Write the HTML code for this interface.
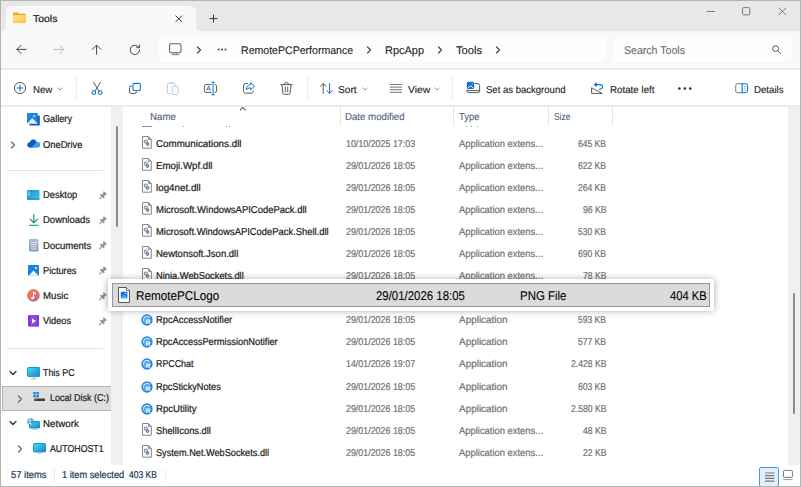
<!DOCTYPE html>
<html><head><meta charset="utf-8"><title>Tools</title>
<style>
*{box-sizing:border-box;margin:0;padding:0}
html,body{width:801px;height:487px;overflow:hidden;background:#fff}
body{font-family:"Liberation Sans",sans-serif;font-size:10px;color:#1b1b1b;position:relative;text-rendering:geometricPrecision}
.a{position:absolute}
.t{position:absolute;white-space:nowrap;line-height:14px;height:14px;transform-origin:0 50%;-webkit-text-stroke:0.22px currentColor}
#titlebar{left:0;top:0;width:801px;height:31px;background:#e8e8e8}
#tab{left:6px;top:6px;width:190px;height:25px;background:#f8f8f8;border-radius:6px 6px 0 0}
#navrow{left:0;top:31px;width:801px;height:37px;background:#f8f8f8}
#addr{left:159px;top:37px;width:447px;height:25px;background:#fdfdfd;border-radius:4px}
#search{left:613px;top:37px;width:179px;height:25px;background:#fdfdfd;border-radius:4px}
#cmd{left:0;top:68px;width:801px;height:39px;background:#fff}
.hl{left:0;width:801px;height:2px;background:#ececec}
#navpane{left:0;top:107px;width:111px;height:358px;background:#fff}
#navscroll{left:110.5px;top:107px;width:12.5px;height:358px;background:#f0f0f0}
#list{left:123px;top:107px;width:665px;height:358px;background:#fff;overflow:hidden}
#vscroll{left:788px;top:107px;width:12px;height:358px;background:#f0f0f0}
#status{left:0;top:465px;width:801px;height:22px;background:#fff}
#frame{left:0;top:0;width:801px;height:487px;border:1px solid #b4b4b4;pointer-events:none}
.nav{color:#1b1b1b}
.row .n{left:156.5px}
.hdr{color:#4c607a}
.g{color:#6d6d6d}
</style></head><body>
<div id="titlebar" class="a"></div>
<div id="tab" class="a"></div>
<div id="navrow" class="a"></div>
<div id="addr" class="a"></div>
<div id="search" class="a"></div>
<div id="cmd" class="a"></div>
<div class="a hl" style="top:68px"></div>
<div class="a hl" style="top:105px"></div>
<div id="navpane" class="a"></div>
<div id="navscroll" class="a"></div>
<div id="list" class="a"></div>
<div id="vscroll" class="a"></div>
<div id="status" class="a"></div>
<div class="a" style="left:196px;top:27px;width:4px;height:4px;background:radial-gradient(circle at 100% 0,#e8e8e8 3.5px,#f8f8f8 4.2px)"></div>
<div class="a" style="left:2px;top:27px;width:4px;height:4px;background:radial-gradient(circle at 0 0,#e8e8e8 3.5px,#f8f8f8 4.2px)"></div>
<svg class="a" style="left:13px;top:12px;" width="13" height="11" viewBox="0 0 13 11" fill="none"><path d="M0 1.6 Q0 0.4 1.2 0.4 H4.6 L6 1.8 H11.8 Q13 1.8 13 3 V9.6 Q13 10.8 11.8 10.8 H1.2 Q0 10.8 0 9.6 Z" fill="#eda90c"/><defs><linearGradient id="fg" x1="0" y1="0" x2="0.6" y2="1"><stop offset="0" stop-color="#ffe48f"/><stop offset="1" stop-color="#ffc94a"/></linearGradient></defs><path d="M0 4 Q0 3 1.2 3 H11.8 Q13 3 13 4.2 V9.6 Q13 10.8 11.8 10.8 H1.2 Q0 10.8 0 9.6 Z" fill="url(#fg)"/></svg>
<svg class="a" style="left:174px;top:13.7px;" width="10" height="10" viewBox="0 0 10 10" fill="none"><path d="M1.6 1.6 L8 8 M8 1.6 L1.6 8" stroke="#333" stroke-width="1"/></svg>
<svg class="a" style="left:208px;top:13px;" width="11" height="11" viewBox="0 0 11 11" fill="none"><path d="M5.5 1.7 V9.5 M1.6 5.6 H9.4" stroke="#333" stroke-width="1"/></svg>
<svg class="a" style="left:705px;top:6px;" width="12" height="12" viewBox="0 0 12 12" fill="none"><path d="M1.6 5.5 H9.8" stroke="#7a7a7a" stroke-width="1"/></svg>
<svg class="a" style="left:741px;top:6px;" width="12" height="12" viewBox="0 0 12 12" fill="none"><rect x="1.6" y="1.6" width="7.2" height="7.2" rx="1" stroke="#7a7a7a" stroke-width="1"/></svg>
<svg class="a" style="left:777px;top:6px;" width="12" height="12" viewBox="0 0 12 12" fill="none"><path d="M1.6 1.8 L9.2 9 M9.2 1.8 L1.6 9" stroke="#7a7a7a" stroke-width="1"/></svg>
<svg class="a" style="left:15px;top:43px;" width="14" height="13" viewBox="0 0 14 13" fill="none"><path d="M2 6.4 H11.2 M6 2.3 L1.9 6.4 L6 10.5" stroke="#444" stroke-width="1" stroke-linecap="round" stroke-linejoin="round"/></svg>
<svg class="a" style="left:52px;top:43px;" width="14" height="13" viewBox="0 0 14 13" fill="none"><path d="M2 6.4 H11.6 M7.6 2.3 L11.7 6.4 L7.6 10.5" stroke="#bdbdbd" stroke-width="1" stroke-linecap="round" stroke-linejoin="round"/></svg>
<svg class="a" style="left:90px;top:43px;" width="14" height="13" viewBox="0 0 14 13" fill="none"><path d="M6.6 2.3 V11.3 M2.3 6.4 L6.6 2.1 L10.9 6.4" stroke="#444" stroke-width="1" stroke-linecap="round" stroke-linejoin="round"/></svg>
<svg class="a" style="left:128px;top:43px;" width="14" height="13" viewBox="0 0 14 13" fill="none"><path d="M10.9 4.4 A4.7 4.7 0 1 0 11.6 6.9" stroke="#444" stroke-width="1" stroke-linecap="round"/><path d="M11.4 1.9 V4.7 H8.6" stroke="#444" stroke-width="1" stroke-linecap="round" stroke-linejoin="round"/></svg>
<svg class="a" style="left:168px;top:42px;" width="15" height="14" viewBox="0 0 15 14" fill="none"><rect x="1.6" y="1.7" width="11.4" height="9" rx="1.7" stroke="#5e5e5e" stroke-width="1.05"/><path d="M5.9 10.8 V12.5 M8.7 10.8 V12.5" stroke="#777" stroke-width="0.9"/><path d="M3.8 12.7 H10.8" stroke="#777" stroke-width="0.9" stroke-linecap="round"/></svg>
<svg class="a" style="left:194.9px;top:44.5px;" width="8" height="10" viewBox="0 0 8 10" fill="none"><path d="M2.5 2 L5.5 5 L2.5 8" stroke="#444" stroke-width="1.15" stroke-linecap="round" stroke-linejoin="round"/></svg>
<svg class="a" style="left:364.5px;top:44.5px;" width="8" height="10" viewBox="0 0 8 10" fill="none"><path d="M2.5 2 L5.5 5 L2.5 8" stroke="#444" stroke-width="1.15" stroke-linecap="round" stroke-linejoin="round"/></svg>
<svg class="a" style="left:436px;top:44.5px;" width="8" height="10" viewBox="0 0 8 10" fill="none"><path d="M2.5 2 L5.5 5 L2.5 8" stroke="#444" stroke-width="1.15" stroke-linecap="round" stroke-linejoin="round"/></svg>
<svg class="a" style="left:494px;top:44.5px;" width="8" height="10" viewBox="0 0 8 10" fill="none"><path d="M2.5 2 L5.5 5 L2.5 8" stroke="#444" stroke-width="1.15" stroke-linecap="round" stroke-linejoin="round"/></svg>
<svg class="a" style="left:216.8px;top:47px;" width="12" height="5" viewBox="0 0 12 5" fill="none"><circle cx="1.7" cy="2.5" r="1" fill="#444"/><circle cx="5.1" cy="2.5" r="1" fill="#444"/><circle cx="8.5" cy="2.5" r="1" fill="#444"/></svg>
<svg class="a" style="left:771px;top:44px;" width="11" height="11" viewBox="0 0 11 11" fill="none"><circle cx="4.6" cy="4.6" r="2.9" stroke="#555" stroke-width="1"/><path d="M6.8 6.8 L9.6 9.6" stroke="#555" stroke-width="1" stroke-linecap="round"/></svg>
<svg class="a" style="left:13px;top:81px;" width="14" height="14" viewBox="0 0 14 14" fill="none"><circle cx="7" cy="7" r="5.6" stroke="#5a5a5a" stroke-width="1"/><path d="M7 4.2 V9.8 M4.2 7 H9.8" stroke="#1173d4" stroke-width="1.1" stroke-linecap="round"/></svg>
<svg class="a" style="left:55.2px;top:85px;" width="10" height="8" viewBox="0 0 10 8" fill="none"><path d="M3.0 3.0 L5 5.0 L7.0 3.0" stroke="#8a8a8a" stroke-width="0.9" stroke-linecap="round" stroke-linejoin="round"/></svg>
<svg class="a" style="left:359.5px;top:85px;" width="10" height="8" viewBox="0 0 10 8" fill="none"><path d="M3.0 3.0 L5 5.0 L7.0 3.0" stroke="#8a8a8a" stroke-width="0.9" stroke-linecap="round" stroke-linejoin="round"/></svg>
<svg class="a" style="left:432.3px;top:85px;" width="10" height="8" viewBox="0 0 10 8" fill="none"><path d="M3.0 3.0 L5 5.0 L7.0 3.0" stroke="#8a8a8a" stroke-width="0.9" stroke-linecap="round" stroke-linejoin="round"/></svg>
<div class="a" style="left:75.5px;top:76px;width:1px;height:24px;background:#ececec"></div>
<div class="a" style="left:307.0px;top:76px;width:1px;height:24px;background:#ececec"></div>
<div class="a" style="left:452.0px;top:76px;width:1px;height:24px;background:#ececec"></div>
<svg class="a" style="left:90px;top:81px;" width="14" height="15" viewBox="0 0 14 15" fill="none"><path d="M3.6 1.2 L9 10.2 M10.4 1.2 L5 10.2" stroke="#5a5a5a" stroke-width="1" stroke-linecap="round"/><circle cx="3.8" cy="11.6" r="1.9" stroke="#1173d4" stroke-width="1.1"/><circle cx="10.2" cy="11.6" r="1.9" stroke="#1173d4" stroke-width="1.1"/></svg>
<svg class="a" style="left:128px;top:82px;" width="14" height="13" viewBox="0 0 14 13" fill="none"><path d="M4.2 4 H3 Q1.6 4 1.6 5.4 V10 Q1.6 11.4 3 11.4 H7 Q8.4 11.4 8.4 10 V9.6" stroke="#5a5a5a" stroke-width="1"/><rect x="5" y="1.4" width="7.4" height="7.4" rx="1.7" stroke="#1173d4" stroke-width="1.1"/></svg>
<svg class="a" style="left:166px;top:81px;" width="14" height="15" viewBox="0 0 14 15" fill="none"><path d="M5.6 12.6 H2.6 Q1.4 12.6 1.4 11.4 V3.4 Q1.4 2.2 2.6 2.2 H8 Q9.2 2.2 9.2 3.4 V4.6" stroke="#c9c9c9" stroke-width="1"/><rect x="3.6" y="1" width="3.6" height="2" rx="0.8" fill="#d6d6d6"/><rect x="6.3" y="5.2" width="5.8" height="8.4" rx="1.2" stroke="#a9d0f4" stroke-width="1"/></svg>
<svg class="a" style="left:203px;top:81px;" width="15" height="15" viewBox="0 0 15 15" fill="none"><path d="M8.6 3.6 H3 Q1.4 3.6 1.4 5.2 V9.8 Q1.4 11.4 3 11.4 H8.6 M11.6 3.6 H12 Q13.6 3.6 13.6 5.2 V9.8 Q13.6 11.4 12 11.4 H11.6" stroke="#5a5a5a" stroke-width="1"/><path d="M10.1 1.4 V13.6 M8.8 1.2 H11.4 M8.8 13.8 H11.4" stroke="#1173d4" stroke-width="1" stroke-linecap="round"/><path d="M3.6 9.6 L5.6 5 L7.6 9.6 M4.3 8.2 H6.9" stroke="#1173d4" stroke-width="0.9" stroke-linejoin="round"/></svg>
<svg class="a" style="left:242px;top:81px;" width="14" height="14" viewBox="0 0 14 14" fill="none"><path d="M5.4 2.6 H3.4 Q1.6 2.6 1.6 4.4 V10.4 Q1.6 12.2 3.4 12.2 H9.4 Q11.2 12.2 11.2 10.4 V9.8" stroke="#5a5a5a" stroke-width="1" stroke-linecap="round"/><path d="M8.6 1.6 L12.6 5.2 L8.6 8.8 V6.8 Q5.6 6.6 4.4 9 Q4.6 4 8.6 3.6 Z" stroke="#1173d4" stroke-width="1" stroke-linejoin="round"/></svg>
<svg class="a" style="left:279px;top:81px;" width="15" height="15" viewBox="0 0 15 15" fill="none"><path d="M1.8 3.6 H13.2 M5.4 3.4 Q5.4 1.4 7.5 1.4 Q9.6 1.4 9.6 3.4 M3 3.8 L3.9 12 Q4 13.4 5.4 13.4 H9.6 Q11 13.4 11.1 12 L12 3.8 M6.3 6 V10.8 M8.7 6 V10.8" stroke="#5a5a5a" stroke-width="1" stroke-linecap="round"/></svg>
<svg class="a" style="left:319px;top:82px;" width="15" height="13" viewBox="0 0 15 13" fill="none"><path d="M4.2 11.4 V1.6 M1.4 4.4 L4.2 1.5 L7 4.4" stroke="#5a5a5a" stroke-width="1" stroke-linecap="round" stroke-linejoin="round"/><path d="M10.6 1.4 V11.2 M7.8 8.4 L10.6 11.3 L13.4 8.4" stroke="#1173d4" stroke-width="1" stroke-linecap="round" stroke-linejoin="round"/></svg>
<svg class="a" style="left:389px;top:83px;" width="14" height="11" viewBox="0 0 14 11" fill="none"><path d="M0.8 1.5 H13 M0.8 4.1 H13 M0.8 6.7 H13 M0.8 9.3 H13" stroke="#666" stroke-width="0.9"/></svg>
<svg class="a" style="left:466px;top:81px;" width="15" height="13" viewBox="0 0 15 13" fill="none"><path d="M8.6 2.6 H11.6 Q13.6 2.6 13.6 4.6 V9.8 Q13.6 11.6 11.8 11.6 H2.8 Q1 11.6 1 9.8 V8.4 M1 9.6 H13.6" stroke="#5a5a5a" stroke-width="1"/><rect x="0.8" y="0.8" width="7.4" height="7.2" rx="1.5" fill="#1173d4"/><path d="M1.8 7.2 L4.5 4.6 L7.2 7.2" stroke="#fff" stroke-width="0.9"/><circle cx="6.2" cy="2.8" r="0.6" fill="#cfe5fa"/></svg>
<svg class="a" style="left:590px;top:82px;" width="15" height="13" viewBox="0 0 15 13" fill="none"><path d="M1.6 5.8 V11.4 H12.2 Z" stroke="#5a5a5a" stroke-width="1" stroke-linejoin="round"/><path d="M4.4 2.6 H9.6 Q12.6 2.6 12.6 5 Q12.6 7 9.2 7.4" stroke="#1173d4" stroke-width="1.1" stroke-linecap="round"/><path d="M6.4 0.8 L4.2 2.6 L6.4 4.4 Z" fill="#1173d4" stroke="#1173d4" stroke-width="0.8" stroke-linejoin="round"/></svg>
<svg class="a" style="left:677px;top:86px;" width="16" height="5" viewBox="0 0 16 5" fill="none"><circle cx="2.4" cy="2.6" r="1.25" fill="#2a2a2a"/><circle cx="7.8" cy="2.6" r="1.25" fill="#2a2a2a"/><circle cx="13.2" cy="2.6" r="1.25" fill="#2a2a2a"/></svg>
<svg class="a" style="left:734px;top:82px;" width="15" height="12" viewBox="0 0 15 12" fill="none"><path d="M8.2 1.7 H3.6 Q1.7 1.7 1.7 3.6 V8.8 Q1.7 10.7 3.6 10.7 H8.2" stroke="#777" stroke-width="1"/><path d="M8.2 1.7 H11.6 Q13.5 1.7 13.5 3.6 V8.8 Q13.5 10.7 11.6 10.7 H8.2 Z" stroke="#1173d4" stroke-width="1.1"/><path d="M10.2 4.4 H11.8 M10.2 6.2 H11.8 M10.2 8 H11.8" stroke="#6aaef0" stroke-width="0.9"/></svg>
<svg class="a" style="left:238px;top:105.5px;" width="10" height="6" viewBox="0 0 10 6" fill="none"><path d="M1.9 4.4 L4.8 1.5 L7.7 4.4" stroke="#5a5a5a" stroke-width="1.05"/></svg>
<div class="a" style="left:340.0px;top:106px;width:1px;height:20px;background:#e5e5e5"></div>
<div class="a" style="left:453.2px;top:106px;width:1px;height:20px;background:#e5e5e5"></div>
<div class="a" style="left:548.2px;top:106px;width:1px;height:20px;background:#e5e5e5"></div>
<div class="a" style="left:611.5px;top:106px;width:1px;height:20px;background:#e5e5e5"></div>
<div class="a" style="left:142px;top:126px;width:9.5px;height:1px;background:#8c8c8c"></div>
<div class="a" style="left:183px;top:126px;width:1.2px;height:1px;background:#999"></div>
<div class="a" style="left:225.5px;top:126px;width:1.2px;height:1px;background:#999"></div>
<div class="a" style="left:229px;top:126px;width:1.2px;height:1px;background:#999"></div>
<div class="a" style="left:466px;top:126px;width:1px;height:1px;background:#999"></div>
<div class="a" style="left:471px;top:126px;width:1px;height:1px;background:#999"></div>
<div class="a" style="left:477px;top:126px;width:1px;height:1px;background:#999"></div>
<div class="a" style="left:116px;top:126px;width:2px;height:101px;background:#8a8a8a;border-radius:1px"></div>
<div class="a" style="left:793px;top:292.5px;width:2px;height:121px;background:#8a8a8a;border-radius:1px"></div>
<div class="a" style="left:8px;top:169.5px;width:95px;height:1px;background:#e3e3e3"></div>
<div class="a" style="left:8px;top:347.5px;width:95px;height:1px;background:#e3e3e3"></div>
<div class="a" style="left:2px;top:386px;width:108.5px;height:24.5px;background:#dedede;border:1px solid #b4b4b4;border-right:0"></div>
<svg class="a" style="left:27px;top:112.5px;" width="13" height="13" viewBox="0 0 13 13" fill="none"><rect x="2.4" y="2.4" width="10.4" height="10.2" rx="1.2" fill="#0f5cb8"/><rect x="0" y="0" width="10.8" height="10.2" rx="1" fill="#1b84de"/><path d="M0.6 10.2 L5.2 5 L10.4 10.2 V10.8 H1.2 Z" fill="#e4f1fc"/><circle cx="7.2" cy="2.9" r="0.9" fill="#e4f1fc"/></svg>
<svg class="a" style="left:26.5px;top:139.2px;" width="13.5" height="9" viewBox="0 0 13.5 9" fill="none"><path d="M3.6 8.4 Q0.4 8.4 0.4 5.8 Q0.4 3.6 2.8 3.2 Q3.8 0.4 6.6 0.6 Q8.6 0.8 9.6 2.8 Q13 2.8 13 5.8 Q13 8.4 10.4 8.4 Z" fill="#1a8ae6"/><path d="M2.8 3.2 Q3.8 0.4 6.6 0.6 Q8.4 0.8 9.4 2.6 L4.6 8.4 H3.6 Q0.4 8.4 0.4 5.8 Q0.4 3.6 2.8 3.2 Z" fill="#0c58c4"/><path d="M5.4 8.4 L9.6 2.9 Q13 2.8 13 5.8 Q13 8.4 10.4 8.4 Z" fill="#36a6f2"/></svg>
<svg class="a" style="left:9px;top:139.7px;" width="8" height="10" viewBox="0 0 8 10" fill="none"><path d="M2.5 2 L5.5 5 L2.5 8" stroke="#6a6a6a" stroke-width="1.3" stroke-linecap="round" stroke-linejoin="round"/></svg>
<svg class="a" style="left:27px;top:190px;" width="12.5" height="10" viewBox="0 0 12.5 10" fill="none"><defs><linearGradient id="dk" x1="0" y1="0" x2="1" y2="1"><stop offset="0" stop-color="#1592d6"/><stop offset="1" stop-color="#3cc4ec"/></linearGradient></defs><rect width="12.5" height="9.6" rx="1" fill="url(#dk)"/><rect x="1.2" y="1.6" width="1.6" height="1.2" fill="#e8f6fd"/><rect x="1.2" y="4" width="1.6" height="1.2" fill="#e8f6fd"/><rect x="0" y="8.6" width="12.5" height="1" fill="#0f6fae"/></svg>
<svg class="a" style="left:28.5px;top:213.5px;" width="10" height="13" viewBox="0 0 10 13" fill="none"><path d="M4.8 0.6 V8.6 M1.2 5.2 L4.8 8.8 L8.4 5.2" stroke="#129a6a" stroke-width="1.2" stroke-linecap="round" stroke-linejoin="round"/><path d="M0.6 11.4 H9" stroke="#1fb47a" stroke-width="1.2" stroke-linecap="round"/></svg>
<svg class="a" style="left:28.5px;top:239px;" width="10" height="13" viewBox="0 0 10 13" fill="none"><defs><linearGradient id="dc" x1="0" y1="0" x2="0" y2="1"><stop offset="0" stop-color="#a9bdd4"/><stop offset="1" stop-color="#7f98b6"/></linearGradient></defs><rect width="9.4" height="12.4" rx="1" fill="url(#dc)"/><path d="M1.8 3.4 H5 M1.8 5.6 H7.6 M1.8 7.8 H7.6 M1.8 10 H7.6" stroke="#f2f6fa" stroke-width="0.9"/><rect x="5.8" y="2.4" width="1.8" height="1.8" fill="#f2f6fa"/></svg>
<svg class="a" style="left:27.5px;top:265px;" width="11.5" height="11" viewBox="0 0 11.5 11" fill="none"><rect width="11.4" height="10.8" rx="1.2" fill="#1b84de"/><path d="M0.8 10.8 L5.4 5.6 L10.6 10.8 Z" fill="#f0f7fd"/><circle cx="8" cy="3" r="1" fill="#f0f7fd"/></svg>
<svg class="a" style="left:26.8px;top:289.2px;" width="13" height="13" viewBox="0 0 13 13" fill="none"><defs><linearGradient id="mu" x1="0" y1="0" x2="1" y2="1"><stop offset="0" stop-color="#f08a3c"/><stop offset="1" stop-color="#cc5a9c"/></linearGradient></defs><circle cx="6.4" cy="6.4" r="6.3" fill="url(#mu)"/><path d="M6.6 9 V3.2 Q7.6 3.4 8.6 4.6" stroke="#fff" stroke-width="1.1" stroke-linecap="round"/><ellipse cx="5.6" cy="9" rx="1.5" ry="1.2" fill="#fff"/></svg>
<svg class="a" style="left:27.5px;top:315px;" width="11.5" height="12" viewBox="0 0 11.5 12" fill="none"><rect width="11.4" height="11.8" rx="1.2" fill="#9046e4"/><path d="M4 3.4 V8.4 L8 5.9 Z" fill="#fff"/><path d="M1.4 1 V11" stroke="#5a1fa8" stroke-width="1.2" stroke-dasharray="1.2 1.4"/><path d="M10 1 V11" stroke="#5a1fa8" stroke-width="1.2" stroke-dasharray="1.2 1.4"/></svg>
<svg class="a" style="left:98px;top:190.5px;" width="9" height="9" viewBox="0 0 9 9" fill="none"><path d="M5.3 0.5 L6.3 0.5 L8.6 2.8 L8.6 3.7 L7.2 4.1 L6.3 5.0 L6.5 7.0 L5.7 7.5 L2.0 3.9 L2.5 3.1 L4.5 3.3 L5.4 2.3 L5.0 1.1 Z" fill="#8796a2"/><path d="M3.8 5.6 L1.6 7.8" stroke="#8796a2" stroke-width="1.1" stroke-linecap="round"/></svg>
<svg class="a" style="left:98px;top:215.8px;" width="9" height="9" viewBox="0 0 9 9" fill="none"><path d="M5.3 0.5 L6.3 0.5 L8.6 2.8 L8.6 3.7 L7.2 4.1 L6.3 5.0 L6.5 7.0 L5.7 7.5 L2.0 3.9 L2.5 3.1 L4.5 3.3 L5.4 2.3 L5.0 1.1 Z" fill="#8796a2"/><path d="M3.8 5.6 L1.6 7.8" stroke="#8796a2" stroke-width="1.1" stroke-linecap="round"/></svg>
<svg class="a" style="left:98px;top:241.1px;" width="9" height="9" viewBox="0 0 9 9" fill="none"><path d="M5.3 0.5 L6.3 0.5 L8.6 2.8 L8.6 3.7 L7.2 4.1 L6.3 5.0 L6.5 7.0 L5.7 7.5 L2.0 3.9 L2.5 3.1 L4.5 3.3 L5.4 2.3 L5.0 1.1 Z" fill="#8796a2"/><path d="M3.8 5.6 L1.6 7.8" stroke="#8796a2" stroke-width="1.1" stroke-linecap="round"/></svg>
<svg class="a" style="left:98px;top:266.3px;" width="9" height="9" viewBox="0 0 9 9" fill="none"><path d="M5.3 0.5 L6.3 0.5 L8.6 2.8 L8.6 3.7 L7.2 4.1 L6.3 5.0 L6.5 7.0 L5.7 7.5 L2.0 3.9 L2.5 3.1 L4.5 3.3 L5.4 2.3 L5.0 1.1 Z" fill="#8796a2"/><path d="M3.8 5.6 L1.6 7.8" stroke="#8796a2" stroke-width="1.1" stroke-linecap="round"/></svg>
<svg class="a" style="left:98px;top:291.6px;" width="9" height="9" viewBox="0 0 9 9" fill="none"><path d="M5.3 0.5 L6.3 0.5 L8.6 2.8 L8.6 3.7 L7.2 4.1 L6.3 5.0 L6.5 7.0 L5.7 7.5 L2.0 3.9 L2.5 3.1 L4.5 3.3 L5.4 2.3 L5.0 1.1 Z" fill="#8796a2"/><path d="M3.8 5.6 L1.6 7.8" stroke="#8796a2" stroke-width="1.1" stroke-linecap="round"/></svg>
<svg class="a" style="left:98px;top:316.6px;" width="9" height="9" viewBox="0 0 9 9" fill="none"><path d="M5.3 0.5 L6.3 0.5 L8.6 2.8 L8.6 3.7 L7.2 4.1 L6.3 5.0 L6.5 7.0 L5.7 7.5 L2.0 3.9 L2.5 3.1 L4.5 3.3 L5.4 2.3 L5.0 1.1 Z" fill="#8796a2"/><path d="M3.8 5.6 L1.6 7.8" stroke="#8796a2" stroke-width="1.1" stroke-linecap="round"/></svg>
<svg class="a" style="left:8.2px;top:368.6px;" width="10" height="8" viewBox="0 0 10 8" fill="none"><path d="M2.0 2.5 L5 5.5 L8.0 2.5" stroke="#333" stroke-width="1.3" stroke-linecap="round" stroke-linejoin="round"/></svg>
<svg class="a" style="left:26.6px;top:367.2px;" width="13.4" height="12.4" viewBox="0 0 13.4 12.4" fill="none"><defs><linearGradient id="m1" x1="0" y1="0" x2="1" y2="1"><stop offset="0" stop-color="#3ee0f4"/><stop offset="1" stop-color="#1784d6"/></linearGradient></defs><rect x="0.5" y="0.5" width="12.4" height="8.920000000000002" rx="1" fill="url(#m1)" stroke="#1c92c4" stroke-width="1"/><rect x="5.9" y="9.920000000000002" width="1.6" height="1.6799999999999986" fill="#b4c0ca"/><rect x="3.7" y="11.3" width="6" height="1.1" rx="0.5" fill="#c2ccd4"/></svg>
<svg class="a" style="left:15.8px;top:393.5px;" width="8" height="10" viewBox="0 0 8 10" fill="none"><path d="M2.5 2 L5.5 5 L2.5 8" stroke="#6a6a6a" stroke-width="1.3" stroke-linecap="round" stroke-linejoin="round"/></svg>
<svg class="a" style="left:32.8px;top:391.7px;" width="13" height="10" viewBox="0 0 13 10" fill="none"><rect x="0.3" y="0" width="2.5" height="2.4" fill="#1b84e2"/><rect x="3.4" y="0" width="2.5" height="2.4" fill="#1b84e2"/><rect x="0.3" y="3" width="2.5" height="2.4" fill="#1b84e2"/><rect x="3.4" y="3" width="2.5" height="2.4" fill="#1b84e2"/><rect x="1.2" y="6.4" width="10.8" height="2.6" rx="0.5" fill="#3a3a3a"/><rect x="2.6" y="7.3" width="1.5" height="0.9" fill="#42d06a"/></svg>
<svg class="a" style="left:8.2px;top:419.2px;" width="10" height="8" viewBox="0 0 10 8" fill="none"><path d="M2.0 2.5 L5 5.5 L8.0 2.5" stroke="#333" stroke-width="1.3" stroke-linecap="round" stroke-linejoin="round"/></svg>
<svg class="a" style="left:29px;top:420.5px;" width="11.4" height="9.4" viewBox="0 0 11.4 9.4" fill="none"><defs><linearGradient id="m2" x1="0" y1="0" x2="1" y2="1"><stop offset="0" stop-color="#3ee0f4"/><stop offset="1" stop-color="#1784d6"/></linearGradient></defs><rect x="0.5" y="0.5" width="10.4" height="6.5200000000000005" rx="1" fill="url(#m2)" stroke="#1c92c4" stroke-width="1"/><rect x="4.9" y="7.5200000000000005" width="1.6" height="1.0799999999999998" fill="#b4c0ca"/><rect x="2.7" y="8.3" width="6" height="1.1" rx="0.5" fill="#c2ccd4"/></svg>
<svg class="a" style="left:26.6px;top:418px;" width="8" height="8" viewBox="0 0 8 8" fill="none"><circle cx="3.6" cy="3.6" r="3.3" fill="#3f9be4"/><path d="M1.2 2.4 Q3.6 3.6 6 2.2 M3 0.6 Q2 3.6 3.6 6.6" stroke="#d2e9fb" stroke-width="0.9" fill="none"/><path d="M1.6 4.8 L4.4 6" stroke="#e8f4fd" stroke-width="1"/></svg>
<svg class="a" style="left:15.8px;top:444px;" width="8" height="10" viewBox="0 0 8 10" fill="none"><path d="M2.5 2 L5.5 5 L2.5 8" stroke="#6a6a6a" stroke-width="1.3" stroke-linecap="round" stroke-linejoin="round"/></svg>
<svg class="a" style="left:33.2px;top:442.6px;" width="13.2" height="11.8" viewBox="0 0 13.2 11.8" fill="none"><defs><linearGradient id="m3" x1="0" y1="0" x2="1" y2="1"><stop offset="0" stop-color="#3ee0f4"/><stop offset="1" stop-color="#1784d6"/></linearGradient></defs><rect x="0.5" y="0.5" width="12.2" height="8.440000000000001" rx="1" fill="url(#m3)" stroke="#1c92c4" stroke-width="1"/><rect x="5.8" y="9.440000000000001" width="1.6" height="1.5599999999999994" fill="#b4c0ca"/><rect x="3.5999999999999996" y="10.700000000000001" width="6" height="1.1" rx="0.5" fill="#c2ccd4"/></svg>
<svg class="a" style="left:142px;top:136px;" width="10" height="13" viewBox="0 0 10 13" fill="none"><path d="M0.5 0.5 H6.3 L9.3 3.5 V12.2 H0.5 Z" fill="#fff" stroke="#858585"/><path d="M6.3 0.5 V3.5 H9.3 Z" fill="#a8a8a8" stroke="#858585" stroke-width="0.7"/><circle cx="3.8" cy="5.5" r="1.55" fill="#e9eef4" stroke="#7d90a6" stroke-width="1.15"/><circle cx="5.6" cy="8.1" r="1.25" fill="#dfe6ee" stroke="#66788c" stroke-width="1.15"/></svg>
<svg class="a" style="left:142px;top:158px;" width="10" height="13" viewBox="0 0 10 13" fill="none"><path d="M0.5 0.5 H6.3 L9.3 3.5 V12.2 H0.5 Z" fill="#fff" stroke="#858585"/><path d="M6.3 0.5 V3.5 H9.3 Z" fill="#a8a8a8" stroke="#858585" stroke-width="0.7"/><circle cx="3.8" cy="5.5" r="1.55" fill="#e9eef4" stroke="#7d90a6" stroke-width="1.15"/><circle cx="5.6" cy="8.1" r="1.25" fill="#dfe6ee" stroke="#66788c" stroke-width="1.15"/></svg>
<svg class="a" style="left:142px;top:180px;" width="10" height="13" viewBox="0 0 10 13" fill="none"><path d="M0.5 0.5 H6.3 L9.3 3.5 V12.2 H0.5 Z" fill="#fff" stroke="#858585"/><path d="M6.3 0.5 V3.5 H9.3 Z" fill="#a8a8a8" stroke="#858585" stroke-width="0.7"/><circle cx="3.8" cy="5.5" r="1.55" fill="#e9eef4" stroke="#7d90a6" stroke-width="1.15"/><circle cx="5.6" cy="8.1" r="1.25" fill="#dfe6ee" stroke="#66788c" stroke-width="1.15"/></svg>
<svg class="a" style="left:142px;top:202px;" width="10" height="13" viewBox="0 0 10 13" fill="none"><path d="M0.5 0.5 H6.3 L9.3 3.5 V12.2 H0.5 Z" fill="#fff" stroke="#858585"/><path d="M6.3 0.5 V3.5 H9.3 Z" fill="#a8a8a8" stroke="#858585" stroke-width="0.7"/><circle cx="3.8" cy="5.5" r="1.55" fill="#e9eef4" stroke="#7d90a6" stroke-width="1.15"/><circle cx="5.6" cy="8.1" r="1.25" fill="#dfe6ee" stroke="#66788c" stroke-width="1.15"/></svg>
<svg class="a" style="left:142px;top:224px;" width="10" height="13" viewBox="0 0 10 13" fill="none"><path d="M0.5 0.5 H6.3 L9.3 3.5 V12.2 H0.5 Z" fill="#fff" stroke="#858585"/><path d="M6.3 0.5 V3.5 H9.3 Z" fill="#a8a8a8" stroke="#858585" stroke-width="0.7"/><circle cx="3.8" cy="5.5" r="1.55" fill="#e9eef4" stroke="#7d90a6" stroke-width="1.15"/><circle cx="5.6" cy="8.1" r="1.25" fill="#dfe6ee" stroke="#66788c" stroke-width="1.15"/></svg>
<svg class="a" style="left:142px;top:246px;" width="10" height="13" viewBox="0 0 10 13" fill="none"><path d="M0.5 0.5 H6.3 L9.3 3.5 V12.2 H0.5 Z" fill="#fff" stroke="#858585"/><path d="M6.3 0.5 V3.5 H9.3 Z" fill="#a8a8a8" stroke="#858585" stroke-width="0.7"/><circle cx="3.8" cy="5.5" r="1.55" fill="#e9eef4" stroke="#7d90a6" stroke-width="1.15"/><circle cx="5.6" cy="8.1" r="1.25" fill="#dfe6ee" stroke="#66788c" stroke-width="1.15"/></svg>
<svg class="a" style="left:142px;top:268px;" width="10" height="13" viewBox="0 0 10 13" fill="none"><path d="M0.5 0.5 H6.3 L9.3 3.5 V12.2 H0.5 Z" fill="#fff" stroke="#858585"/><path d="M6.3 0.5 V3.5 H9.3 Z" fill="#a8a8a8" stroke="#858585" stroke-width="0.7"/><circle cx="3.8" cy="5.5" r="1.55" fill="#e9eef4" stroke="#7d90a6" stroke-width="1.15"/><circle cx="5.6" cy="8.1" r="1.25" fill="#dfe6ee" stroke="#66788c" stroke-width="1.15"/></svg>
<svg class="a" style="left:140.7px;top:314.3px;" width="12" height="12" viewBox="0 0 12 12" fill="none"><circle cx="6" cy="6" r="5.65" fill="#2484e0"/><circle cx="6" cy="6" r="4.1" fill="#4a9fec"/><path d="M2.5 6.4 A3.5 3.5 0 0 1 8.6 3.6" stroke="#cfe6fb" stroke-width="1.1"/><path d="M3.5 8.7 A3.5 3.5 0 0 1 3 4.6" stroke="#a9d2f7" stroke-width="0.9"/><text x="4.5" y="9.7" font-family="Liberation Sans,sans-serif" font-weight="bold" font-size="6.6" fill="#fff">R</text></svg>
<svg class="a" style="left:140.7px;top:336.3px;" width="12" height="12" viewBox="0 0 12 12" fill="none"><circle cx="6" cy="6" r="5.65" fill="#2484e0"/><circle cx="6" cy="6" r="4.1" fill="#4a9fec"/><path d="M2.5 6.4 A3.5 3.5 0 0 1 8.6 3.6" stroke="#cfe6fb" stroke-width="1.1"/><path d="M3.5 8.7 A3.5 3.5 0 0 1 3 4.6" stroke="#a9d2f7" stroke-width="0.9"/><text x="4.5" y="9.7" font-family="Liberation Sans,sans-serif" font-weight="bold" font-size="6.6" fill="#fff">R</text></svg>
<svg class="a" style="left:140.7px;top:358.3px;" width="12" height="12" viewBox="0 0 12 12" fill="none"><circle cx="6" cy="6" r="5.65" fill="#2484e0"/><circle cx="6" cy="6" r="4.1" fill="#4a9fec"/><path d="M2.5 6.4 A3.5 3.5 0 0 1 8.6 3.6" stroke="#cfe6fb" stroke-width="1.1"/><path d="M3.5 8.7 A3.5 3.5 0 0 1 3 4.6" stroke="#a9d2f7" stroke-width="0.9"/><text x="4.5" y="9.7" font-family="Liberation Sans,sans-serif" font-weight="bold" font-size="6.6" fill="#fff">R</text></svg>
<svg class="a" style="left:140.7px;top:380.7px;" width="12" height="12" viewBox="0 0 12 12" fill="none"><circle cx="6" cy="6" r="5.65" fill="#2484e0"/><circle cx="6" cy="6" r="4.1" fill="#4a9fec"/><path d="M2.5 6.4 A3.5 3.5 0 0 1 8.6 3.6" stroke="#cfe6fb" stroke-width="1.1"/><path d="M3.5 8.7 A3.5 3.5 0 0 1 3 4.6" stroke="#a9d2f7" stroke-width="0.9"/><text x="4.5" y="9.7" font-family="Liberation Sans,sans-serif" font-weight="bold" font-size="6.6" fill="#fff">R</text></svg>
<svg class="a" style="left:140.7px;top:402.7px;" width="12" height="12" viewBox="0 0 12 12" fill="none"><circle cx="6" cy="6" r="5.65" fill="#2484e0"/><circle cx="6" cy="6" r="4.1" fill="#4a9fec"/><path d="M2.5 6.4 A3.5 3.5 0 0 1 8.6 3.6" stroke="#cfe6fb" stroke-width="1.1"/><path d="M3.5 8.7 A3.5 3.5 0 0 1 3 4.6" stroke="#a9d2f7" stroke-width="0.9"/><text x="4.5" y="9.7" font-family="Liberation Sans,sans-serif" font-weight="bold" font-size="6.6" fill="#fff">R</text></svg>
<svg class="a" style="left:142px;top:423px;" width="10" height="13" viewBox="0 0 10 13" fill="none"><path d="M0.5 0.5 H6.3 L9.3 3.5 V12.2 H0.5 Z" fill="#fff" stroke="#858585"/><path d="M6.3 0.5 V3.5 H9.3 Z" fill="#a8a8a8" stroke="#858585" stroke-width="0.7"/><circle cx="3.8" cy="5.5" r="1.55" fill="#e9eef4" stroke="#7d90a6" stroke-width="1.15"/><circle cx="5.6" cy="8.1" r="1.25" fill="#dfe6ee" stroke="#66788c" stroke-width="1.15"/></svg>
<svg class="a" style="left:142px;top:445px;" width="10" height="13" viewBox="0 0 10 13" fill="none"><path d="M0.5 0.5 H6.3 L9.3 3.5 V12.2 H0.5 Z" fill="#fff" stroke="#858585"/><path d="M6.3 0.5 V3.5 H9.3 Z" fill="#a8a8a8" stroke="#858585" stroke-width="0.7"/><circle cx="3.8" cy="5.5" r="1.55" fill="#e9eef4" stroke="#7d90a6" stroke-width="1.15"/><circle cx="5.6" cy="8.1" r="1.25" fill="#dfe6ee" stroke="#66788c" stroke-width="1.15"/></svg>
<div class="a" style="left:53.5px;top:469px;width:1px;height:13px;background:#e9e9e9"></div>
<div class="a" style="left:165px;top:469px;width:1px;height:13px;background:#ececec"></div>
<div class="a" style="left:759px;top:467px;width:19.5px;height:20px;background:#e3f0fb;border:1.4px solid #4a98e6;border-radius:2px"></div>
<svg class="a" style="left:764px;top:471px;" width="12" height="12" viewBox="0 0 12 12" fill="none"><path d="M1 2 H10.4 M1 4.7 H10.4 M1 7.4 H10.4 M1 10.1 H10.4" stroke="#777" stroke-width="1.2"/></svg>
<svg class="a" style="left:782px;top:469px;" width="12" height="12" viewBox="0 0 12 12" fill="none"><rect x="1.4" y="1.4" width="9" height="7" rx="0.8" stroke="#777" stroke-width="1"/><path d="M1.2 10.6 H10.6" stroke="#999" stroke-width="1"/></svg>
<div class="t" style="left:33.45px;top:13.00px;font-size:10.0px;transform:scaleX(1.0445);color:#1b1b1b;">Tools</div>
<div class="t" style="left:240.68px;top:44.00px;font-size:11.2px;transform:scaleX(0.9441);color:#1b1b1b;-webkit-text-stroke-width:0.1px;">RemotePCPerformance</div>
<div class="t" style="left:385.08px;top:44.00px;font-size:11.2px;transform:scaleX(0.9804);color:#1b1b1b;-webkit-text-stroke-width:0.1px;">RpcApp</div>
<div class="t" style="left:455.98px;top:44.00px;font-size:11.2px;transform:scaleX(1.0003);color:#1b1b1b;-webkit-text-stroke-width:0.1px;">Tools</div>
<div class="t" style="left:624.18px;top:44.00px;font-size:11.2px;transform:scaleX(0.9451);color:#666;-webkit-text-stroke-width:0.05px;">Search Tools</div>
<div class="t" style="left:33.35px;top:84.00px;font-size:10.0px;transform:scaleX(0.9642);color:#1b1b1b;-webkit-text-stroke-width:0.12px;">New</div>
<div class="t" style="left:338.45px;top:84.00px;font-size:10.0px;transform:scaleX(1.014);color:#1b1b1b;-webkit-text-stroke-width:0.12px;">Sort</div>
<div class="t" style="left:407.95px;top:84.00px;font-size:10.0px;transform:scaleX(1.0279);color:#1b1b1b;-webkit-text-stroke-width:0.12px;">View</div>
<div class="t" style="left:485.95px;top:84.00px;font-size:10.0px;transform:scaleX(0.9533);color:#1b1b1b;-webkit-text-stroke-width:0.12px;">Set as background</div>
<div class="t" style="left:609.85px;top:84.00px;font-size:10.0px;transform:scaleX(0.976);color:#1b1b1b;-webkit-text-stroke-width:0.12px;">Rotate left</div>
<div class="t" style="left:753.95px;top:84.00px;font-size:10.0px;transform:scaleX(0.968);color:#1b1b1b;-webkit-text-stroke-width:0.12px;">Details</div>
<div class="t" style="left:150.05px;top:111.00px;font-size:10.0px;transform:scaleX(0.9742);color:#4c607a;-webkit-text-stroke-width:0.1px;">Name</div>
<div class="t" style="left:345.45px;top:111.00px;font-size:10.0px;transform:scaleX(0.9659);color:#4c607a;-webkit-text-stroke-width:0.1px;">Date modified</div>
<div class="t" style="left:459.45px;top:111.00px;font-size:10.0px;transform:scaleX(0.9406);color:#4c607a;-webkit-text-stroke-width:0.1px;">Type</div>
<div class="t" style="left:554.25px;top:111.00px;font-size:10.0px;transform:scaleX(0.8379);color:#4c607a;-webkit-text-stroke-width:0.1px;">Size</div>
<div class="t" style="left:43.25px;top:113.00px;font-size:10.0px;transform:scaleX(0.9152);color:#1b1b1b;">Gallery</div>
<div class="t" style="left:43.25px;top:139.00px;font-size:10.0px;transform:scaleX(0.9325);color:#1b1b1b;">OneDrive</div>
<div class="t" style="left:43.25px;top:189.00px;font-size:10.0px;transform:scaleX(0.9349);color:#1b1b1b;">Desktop</div>
<div class="t" style="left:43.25px;top:214.00px;font-size:10.0px;transform:scaleX(0.9498);color:#1b1b1b;">Downloads</div>
<div class="t" style="left:43.25px;top:240.00px;font-size:10.0px;transform:scaleX(0.955);color:#1b1b1b;">Documents</div>
<div class="t" style="left:43.25px;top:265.00px;font-size:10.0px;transform:scaleX(0.9273);color:#1b1b1b;">Pictures</div>
<div class="t" style="left:43.25px;top:290.00px;font-size:10.0px;transform:scaleX(0.9684);color:#1b1b1b;">Music</div>
<div class="t" style="left:43.25px;top:315.00px;font-size:10.0px;transform:scaleX(0.9242);color:#1b1b1b;">Videos</div>
<div class="t" style="left:43.25px;top:367.00px;font-size:10.0px;transform:scaleX(0.8886);color:#1b1b1b;">This PC</div>
<div class="t" style="left:49.55px;top:392.00px;font-size:10.0px;transform:scaleX(0.9012);color:#1b1b1b;">Local Disk (C:)</div>
<div class="t" style="left:43.25px;top:418.00px;font-size:10.0px;transform:scaleX(0.9758);color:#1b1b1b;">Network</div>
<div class="t" style="left:49.55px;top:443.00px;font-size:10.0px;transform:scaleX(0.8796);color:#1b1b1b;">AUTOHOST1</div>
<div class="t" style="left:10.85px;top:469.00px;font-size:10.0px;transform:scaleX(0.9392);color:#20395a;">57 items</div>
<div class="t" style="left:62.05px;top:469.00px;font-size:10.0px;transform:scaleX(0.9247);color:#20395a;">1 item selected</div>
<div class="t" style="left:129.15px;top:469.00px;font-size:10.0px;transform:scaleX(0.8503);color:#20395a;">403 KB</div>
<div class="t" style="left:156.05px;top:138.00px;font-size:10.0px;transform:scaleX(0.9798);color:#1b1b1b;">Communications.dll</div>
<div class="t" style="left:346.25px;top:138.00px;font-size:10.0px;transform:scaleX(0.8875);color:#737373;">10/10/2025 17:03</div>
<div class="t" style="left:458.95px;top:138.00px;font-size:10.0px;transform:scaleX(0.9397);color:#737373;">Application extens...</div>
<div class="t" style="left:578.25px;top:138.00px;font-size:10.0px;transform:scaleX(0.8533);color:#737373;">645 KB</div>
<div class="t" style="left:156.05px;top:160.00px;font-size:10.0px;transform:scaleX(0.9681);color:#1b1b1b;">Emoji.Wpf.dll</div>
<div class="t" style="left:346.25px;top:160.00px;font-size:10.0px;transform:scaleX(0.8875);color:#737373;">29/01/2026 18:05</div>
<div class="t" style="left:458.95px;top:160.00px;font-size:10.0px;transform:scaleX(0.9397);color:#737373;">Application extens...</div>
<div class="t" style="left:578.25px;top:160.00px;font-size:10.0px;transform:scaleX(0.8533);color:#737373;">622 KB</div>
<div class="t" style="left:156.05px;top:182.00px;font-size:10.0px;transform:scaleX(0.9804);color:#1b1b1b;">log4net.dll</div>
<div class="t" style="left:346.25px;top:182.00px;font-size:10.0px;transform:scaleX(0.8875);color:#737373;">29/01/2026 18:05</div>
<div class="t" style="left:458.95px;top:182.00px;font-size:10.0px;transform:scaleX(0.9397);color:#737373;">Application extens...</div>
<div class="t" style="left:578.25px;top:182.00px;font-size:10.0px;transform:scaleX(0.8533);color:#737373;">264 KB</div>
<div class="t" style="left:156.05px;top:204.00px;font-size:10.0px;transform:scaleX(0.9481);color:#1b1b1b;">Microsoft.WindowsAPICodePack.dll</div>
<div class="t" style="left:346.25px;top:204.00px;font-size:10.0px;transform:scaleX(0.8875);color:#737373;">29/01/2026 18:05</div>
<div class="t" style="left:458.95px;top:204.00px;font-size:10.0px;transform:scaleX(0.9397);color:#737373;">Application extens...</div>
<div class="t" style="left:582.75px;top:204.00px;font-size:10.0px;transform:scaleX(0.8624);color:#737373;">96 KB</div>
<div class="t" style="left:156.05px;top:226.00px;font-size:10.0px;transform:scaleX(0.9382);color:#1b1b1b;">Microsoft.WindowsAPICodePack.Shell.dll</div>
<div class="t" style="left:346.25px;top:226.00px;font-size:10.0px;transform:scaleX(0.8875);color:#737373;">29/01/2026 18:05</div>
<div class="t" style="left:458.95px;top:226.00px;font-size:10.0px;transform:scaleX(0.9397);color:#737373;">Application extens...</div>
<div class="t" style="left:578.25px;top:226.00px;font-size:10.0px;transform:scaleX(0.8533);color:#737373;">530 KB</div>
<div class="t" style="left:156.05px;top:248.00px;font-size:10.0px;transform:scaleX(0.949);color:#1b1b1b;">Newtonsoft.Json.dll</div>
<div class="t" style="left:346.25px;top:248.00px;font-size:10.0px;transform:scaleX(0.8875);color:#737373;">29/01/2026 18:05</div>
<div class="t" style="left:458.95px;top:248.00px;font-size:10.0px;transform:scaleX(0.9397);color:#737373;">Application extens...</div>
<div class="t" style="left:578.25px;top:248.00px;font-size:10.0px;transform:scaleX(0.8533);color:#737373;">690 KB</div>
<div class="t" style="left:156.05px;top:270.00px;font-size:10.0px;transform:scaleX(0.9299);color:#1b1b1b;">Ninja.WebSockets.dll</div>
<div class="t" style="left:346.25px;top:270.00px;font-size:10.0px;transform:scaleX(0.8875);color:#737373;">29/01/2026 18:05</div>
<div class="t" style="left:458.95px;top:270.00px;font-size:10.0px;transform:scaleX(0.9397);color:#737373;">Application extens...</div>
<div class="t" style="left:582.75px;top:270.00px;font-size:10.0px;transform:scaleX(0.8624);color:#737373;">78 KB</div>
<div class="t" style="left:156.05px;top:314.00px;font-size:10.0px;transform:scaleX(0.9326);color:#1b1b1b;">RpcAccessNotifier</div>
<div class="t" style="left:346.25px;top:314.00px;font-size:10.0px;transform:scaleX(0.8875);color:#737373;">29/01/2026 18:05</div>
<div class="t" style="left:458.95px;top:314.00px;font-size:10.0px;transform:scaleX(0.9934);color:#737373;">Application</div>
<div class="t" style="left:578.25px;top:314.00px;font-size:10.0px;transform:scaleX(0.8533);color:#737373;">593 KB</div>
<div class="t" style="left:156.05px;top:336.00px;font-size:10.0px;transform:scaleX(0.9279);color:#1b1b1b;">RpcAccessPermissionNotifier</div>
<div class="t" style="left:346.25px;top:336.00px;font-size:10.0px;transform:scaleX(0.8875);color:#737373;">29/01/2026 18:05</div>
<div class="t" style="left:458.95px;top:336.00px;font-size:10.0px;transform:scaleX(0.9934);color:#737373;">Application</div>
<div class="t" style="left:578.25px;top:336.00px;font-size:10.0px;transform:scaleX(0.8533);color:#737373;">577 KB</div>
<div class="t" style="left:156.05px;top:358.00px;font-size:10.0px;transform:scaleX(0.8852);color:#1b1b1b;">RPCChat</div>
<div class="t" style="left:346.25px;top:358.00px;font-size:10.0px;transform:scaleX(0.8875);color:#737373;">14/01/2026 19:07</div>
<div class="t" style="left:458.95px;top:358.00px;font-size:10.0px;transform:scaleX(0.9934);color:#737373;">Application</div>
<div class="t" style="left:570.75px;top:358.00px;font-size:10.0px;transform:scaleX(0.8626);color:#737373;">2.428 KB</div>
<div class="t" style="left:156.05px;top:381.00px;font-size:10.0px;transform:scaleX(0.9181);color:#1b1b1b;">RpcStickyNotes</div>
<div class="t" style="left:346.25px;top:381.00px;font-size:10.0px;transform:scaleX(0.8875);color:#737373;">29/01/2026 18:05</div>
<div class="t" style="left:458.95px;top:381.00px;font-size:10.0px;transform:scaleX(0.9934);color:#737373;">Application</div>
<div class="t" style="left:578.25px;top:381.00px;font-size:10.0px;transform:scaleX(0.8533);color:#737373;">603 KB</div>
<div class="t" style="left:156.05px;top:403.00px;font-size:10.0px;transform:scaleX(0.9613);color:#1b1b1b;">RpcUtility</div>
<div class="t" style="left:346.25px;top:403.00px;font-size:10.0px;transform:scaleX(0.8875);color:#737373;">29/01/2026 18:05</div>
<div class="t" style="left:458.95px;top:403.00px;font-size:10.0px;transform:scaleX(0.9934);color:#737373;">Application</div>
<div class="t" style="left:570.75px;top:403.00px;font-size:10.0px;transform:scaleX(0.8626);color:#737373;">2.580 KB</div>
<div class="t" style="left:156.05px;top:425.00px;font-size:10.0px;transform:scaleX(0.9317);color:#1b1b1b;">ShellIcons.dll</div>
<div class="t" style="left:346.25px;top:425.00px;font-size:10.0px;transform:scaleX(0.8875);color:#737373;">29/01/2026 18:05</div>
<div class="t" style="left:458.95px;top:425.00px;font-size:10.0px;transform:scaleX(0.9397);color:#737373;">Application extens...</div>
<div class="t" style="left:582.75px;top:425.00px;font-size:10.0px;transform:scaleX(0.8624);color:#737373;">48 KB</div>
<div class="t" style="left:156.05px;top:447.00px;font-size:10.0px;transform:scaleX(0.918);color:#1b1b1b;">System.Net.WebSockets.dll</div>
<div class="t" style="left:346.25px;top:447.00px;font-size:10.0px;transform:scaleX(0.8875);color:#737373;">29/01/2026 18:05</div>
<div class="t" style="left:458.95px;top:447.00px;font-size:10.0px;transform:scaleX(0.9397);color:#737373;">Application extens...</div>
<div class="t" style="left:582.75px;top:447.00px;font-size:10.0px;transform:scaleX(0.8624);color:#737373;">22 KB</div>
<div class="a" style="left:108px;top:279px;width:606px;height:31.5px;background:#fff;box-shadow:0 0.3px 7px rgba(0,0,0,.36)"></div>
<div class="a" style="left:112.3px;top:283.2px;width:597.5px;height:23.4px;background:#dbdbdb;border:1px solid #979797"></div>
<svg class="a" style="left:118px;top:287px;" width="12" height="16" viewBox="0 0 12 16" fill="none"><path d="M0.5 0.5 H8.4 L11.5 3.6 V15.5 H0.5 Z" fill="#fff" stroke="#555"/><path d="M8.4 0.5 V3.6 H11.5" stroke="#555" stroke-width="0.9" fill="#eee"/><rect x="2.8" y="4.8" width="6.6" height="6.4" rx="0.6" fill="#1b6fe0"/><path d="M2.8 11.2 L6 7.4 L9.4 10.6 V11.2 Z" fill="#3cb4f0"/><circle cx="7.8" cy="6.4" r="0.7" fill="#dbeeff"/></svg>
<div class="t" style="left:135.60px;top:289.00px;font-size:12.8px;transform:scaleX(0.9148);color:#000;-webkit-text-stroke-width:0.1px;">RemotePCLogo</div>
<div class="t" style="left:376.30px;top:289.00px;font-size:12.8px;transform:scaleX(0.8923);color:#000;-webkit-text-stroke-width:0.1px;">29/01/2026 18:05</div>
<div class="t" style="left:519.80px;top:289.00px;font-size:12.8px;transform:scaleX(0.8941);color:#000;-webkit-text-stroke-width:0.1px;">PNG File</div>
<div class="t" style="left:669.80px;top:289.00px;font-size:12.8px;transform:scaleX(0.8767);color:#000;-webkit-text-stroke-width:0.1px;">404 KB</div>
<div id="frame" class="a"></div>
</body></html>
